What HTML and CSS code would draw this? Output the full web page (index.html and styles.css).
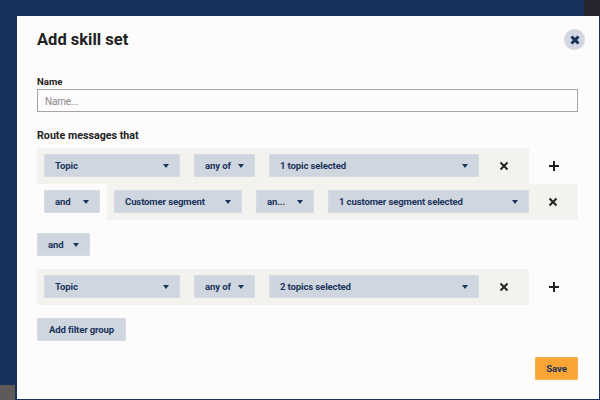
FILE: index.html
```html
<!DOCTYPE html>
<html lang="en">
<head>
<meta charset="utf-8">
<title>Add skill set</title>
<link rel="stylesheet" href="styles.css">
</head>
<body>
<div class="corner corner-tr"></div>
<div class="corner corner-bl"></div>
<main class="modal">
  <header class="modal-head">
    <h1>Add skill set</h1>
    <button class="close" aria-label="Close"><svg width="12" height="12" viewBox="0 0 12 12"><path d="M2.500 2.500l7 7M9.500 2.500l-7 7" class="x-navy"/></svg></button>
  </header>
  <label class="label" for="name">Name</label>
  <input class="input" id="name" placeholder="Name...">
  <h2>Route messages that</h2>
  <section class="group">
    <div class="line">
      <div class="filter">
        <button class="sel w-topic"><span>Topic</span><i class="caret"></i></button>
        <button class="sel w-any"><span>any of</span><i class="caret"></i></button>
        <button class="sel w-val"><span>1 topic selected</span><i class="caret"></i></button>
        <span class="icon"><svg width="10" height="10" viewBox="0 0 10 10"><path d="M1.500 1.500l7 7M8.500 1.500l-7 7" class="x"/></svg></span>
      </div>
      <span class="icon plus"><svg width="10" height="10" viewBox="0 0 10 10"><path d="M5 0v10M0 5h10" class="x"/></svg></span>
    </div>
    <div class="line">
      <div class="joiner"><button class="sel w-and"><span>and</span><i class="caret"></i></button></div>
      <div class="filter nested">
        <button class="sel w-seg"><span>Customer segment</span><i class="caret"></i></button>
        <button class="sel w-an"><span>an...</span><i class="caret"></i></button>
        <button class="sel w-val2"><span>1 customer segment selected</span><i class="caret"></i></button>
        <span class="icon"><svg width="10" height="10" viewBox="0 0 10 10"><path d="M1.500 1.500l7 7M8.500 1.500l-7 7" class="x"/></svg></span>
      </div>
    </div>
  </section>
  <button class="sel w-and2 outer-and"><span>and</span><i class="caret"></i></button>
  <section class="group">
    <div class="line">
      <div class="filter">
        <button class="sel w-topic"><span>Topic</span><i class="caret"></i></button>
        <button class="sel w-any"><span>any of</span><i class="caret"></i></button>
        <button class="sel w-val"><span>2 topics selected</span><i class="caret"></i></button>
        <span class="icon"><svg width="10" height="10" viewBox="0 0 10 10"><path d="M1.500 1.500l7 7M8.500 1.500l-7 7" class="x"/></svg></span>
      </div>
      <span class="icon plus"><svg width="10" height="10" viewBox="0 0 10 10"><path d="M5 0v10M0 5h10" class="x"/></svg></span>
    </div>
  </section>
  <button class="sel add">Add filter group</button>
  <footer class="foot"><button class="save">Save</button></footer>
</main>
</body>
</html>
```
FILE: styles.css
```css
* { box-sizing: border-box; }
html, body { margin: 0; height: 100%; }
body {
  width: 600px; height: 400px; overflow: hidden; background: #16335b;
  font-family: Roboto, "Noto Sans", sans-serif; padding: 16px 1px 0 17px;
  position: relative;
}
.corner { position: absolute; }
.corner-tr { right: 0; top: 0; width: 16px; height: 16px; background: #26262e; }
.corner-bl { left: 0; bottom: 0; width: 15px; height: 15px; background: #5f5a5a; }
.modal {
  height: 383px; background: #fdfbfc; padding: 0 21px 0 20px; position: relative;
  display: flex; flex-direction: column; align-items: flex-start;
}
.modal-head { width: 100%; height: 47px; display: flex; justify-content: space-between; align-items: center; margin-bottom: 11px; }
h1 { margin: 0; font-size: 16.500px; line-height: 23px; font-weight: 700; color: #222; }
.close { width: 21px; height: 21px; margin: 0 -7px 0 0; padding: 0; border: 0; border-radius: 50%; background: #d2d7e0; display: flex; align-items: center; justify-content: center; }
.x-navy { stroke: #16335b; stroke-width: 3; fill: none; }
.label { font-size: 9.600px; line-height: 15px; font-weight: 700; color: #222; height: 15px; }
.input { width: 100%; height: 23px; margin: 0; padding: 2px 7px 0; border: 1px solid #a4a4a4; background: #fdfbfc; font: 400 10px Roboto, sans-serif; letter-spacing: -0.2px; }
.input::placeholder { color: #8a8a8a; opacity: 1; }
h2 { margin: 16px 0 4px; font-size: 10.700px; line-height: 16px; font-weight: 700; color: #222; }
.group { width: 100%; }
.line { display: flex; height: 36px; }
.filter { width: 492px; height: 36px; padding: 6px 0 0 7px; background: #f4f2ee; display: flex; align-items: flex-start; gap: 14px; }
.filter.nested { width: 471px; }
.joiner { width: 70px; padding: 6px 0 0 7px; }
.sel {
  height: 23px; margin: 0; padding: 1px 10px 0; border: 1px solid #d6dae2; border-radius: 1px; background: #d0d6df; color: #1b355c;
  font: 700 9.600px/1 Roboto, sans-serif; letter-spacing: -0.15px; display: flex; align-items: center; justify-content: space-between; flex: none; white-space: nowrap;
}
.caret { width: 0; height: 0; border: 4px solid transparent; border-top-color: #1b355c; border-bottom: 0; border-left-width: 3.500px; border-right-width: 3.500px; flex: none; }
.w-topic { width: 136px; }
.w-any { width: 61px; }
.w-val { width: 210px; }
.w-and { width: 56px; }
.w-seg { width: 128px; }
.w-an { width: 58px; }
.w-val2 { width: 201px; }
.w-and2 { width: 53px; }
.outer-and { margin: 13px 0 13px; }
.icon { width: 22px; height: 23px; display: flex; align-items: center; justify-content: center; flex: none; }
.icon.plus { width: 49px; height: 36px; }
.nested .icon { width: 20px; }
.x { stroke: #222; stroke-width: 2; fill: none; }
.add { margin-top: 13px; width: 89px; justify-content: center; padding: 1px 0 0; }
.foot { width: 100%; margin-top: 16px; display: flex; justify-content: flex-end; }
.save { width: 43px; height: 23px; padding: 1px 0 0; border: 1px solid #f8b14e; border-radius: 1px; background: #f9a435; color: #1b355c; font: 700 9.600px/1 Roboto, sans-serif; letter-spacing: -0.15px; }
```
